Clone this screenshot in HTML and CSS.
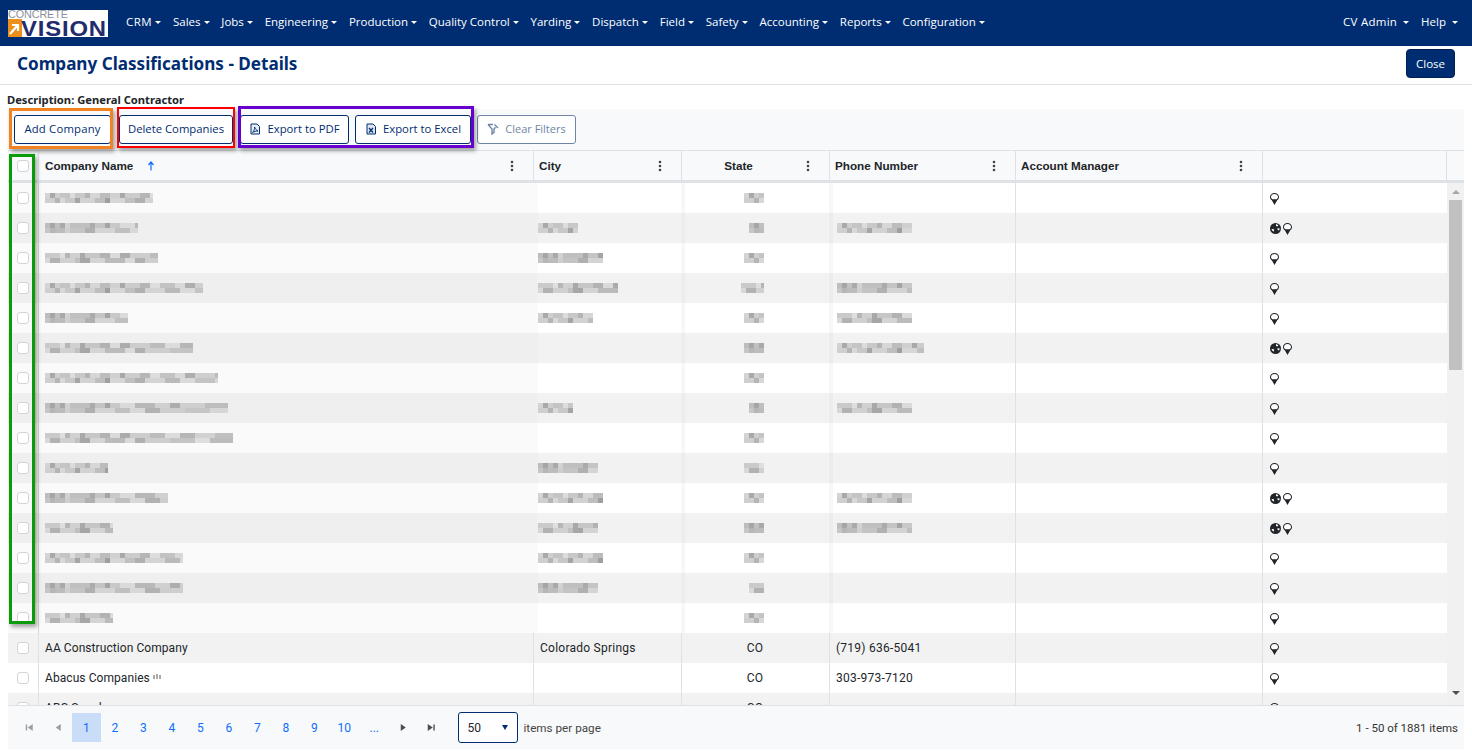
FILE: index.html
```html
<!DOCTYPE html>
<html lang="en">
<head>
<meta charset="utf-8">
<title>Company Classifications - Details</title>
<link rel="stylesheet" href="styles.css">
</head>
<body>
<svg class="defs" width="0" height="0" aria-hidden="true">
  <symbol id="pin" viewBox="0 0 9 12">
    <path d="M4.5 0C2 0 0 1.800 0 4 0 5.400 .8 6.600 1.800 7.300L4.500 12 7.200 7.300C8.200 6.600 9 5.400 9 4 9 1.800 7 0 4.500 0Z" fill="#212529"/>
    <path d="M4.5 1C2.600 1 1 2.300 1 4 1 5 1.600 5.800 2.400 6.200H6.600C7.400 5.800 8 5 8 4 8 2.300 6.400 1 4.500 1Z" fill="#fff"/>
  </symbol>
  <symbol id="globe" viewBox="0 0 11 11">
    <circle cx="5.5" cy="5.5" r="5.500" fill="#212529"/>
    <path d="M6 1 8.400 2.200 7.400 3.400 6 3ZM1.400 6.400 3.200 5.800 4.200 7 3.400 8.800ZM7.400 5.200 9.800 5.400 9 7.400 7.600 6.800Z" fill="#fff"/>
  </symbol>
  <symbol id="pager-first" viewBox="0 0 9 9"><path d="M1 1.500H2.400V7.500H1ZM8 1V8L3 4.500Z" fill="currentColor"/></symbol>
  <symbol id="pager-prev" viewBox="0 0 9 9"><path d="M7 1V8L2 4.500Z" fill="currentColor"/></symbol>
  <symbol id="pager-next" viewBox="0 0 9 9"><path d="M2 1V8L7 4.500Z" fill="currentColor"/></symbol>
  <symbol id="pager-last" viewBox="0 0 9 9"><path d="M8 1.500H6.600V7.500H8ZM1 1V8L6 4.500Z" fill="currentColor"/></symbol>
  <symbol id="kebab" viewBox="0 0 4 12"><circle cx="2" cy="2" r="1.300" fill="#444"/><circle cx="2" cy="6" r="1.300" fill="#444"/><circle cx="2" cy="10" r="1.300" fill="#444"/></symbol>
</svg>

<nav class="navbar">
  <div class="logo">
    <span class="logo-top">CONCRETE</span>
    <span class="logo-mark"><svg class="logo-box" width="14" height="18" viewBox="0 0 14 18"><rect width="14" height="18" fill="#ee8f1c"/><path d="M2 15 9 7M4 6H10V12" stroke="#fff" stroke-width="2.200" fill="none"/></svg><span class="logo-word">VISION</span></span>
  </div>
  <ul class="nav-list">
    <li class="nav-item">CRM</li>
    <li class="nav-item">Sales</li>
    <li class="nav-item">Jobs</li>
    <li class="nav-item">Engineering</li>
    <li class="nav-item">Production</li>
    <li class="nav-item">Quality Control</li>
    <li class="nav-item">Yarding</li>
    <li class="nav-item">Dispatch</li>
    <li class="nav-item">Field</li>
    <li class="nav-item">Safety</li>
    <li class="nav-item">Accounting</li>
    <li class="nav-item">Reports</li>
    <li class="nav-item">Configuration</li>
  </ul>
  <ul class="nav-list nav-right">
    <li class="nav-item wide">CV Admin</li>
    <li class="nav-item">Help</li>
  </ul>
</nav>

<header class="page-head">
  <h1 class="page-title">Company Classifications - Details</h1>
  <button class="btn-close">Close</button>
</header>

<main class="content">
  <div class="description">Description: General Contractor</div>
  <div class="grid">
    <div class="toolbar">
      <button class="btn btn-add">Add Company</button>
      <button class="btn btn-del">Delete Companies</button>
      <button class="btn btn-pdf"><svg class="btn-ico" viewBox="0 0 12 12"><path d="M2 1H8L10.500 3.500V11H2Z" fill="#e8ecf3" stroke="#002d72"/><path d="M3.500 9.500C5 8 6 5.500 5.500 4 6.500 6 7.500 7.500 9 8 7 8 5 8.500 3.500 9.500Z" fill="none" stroke="#002d72" stroke-width=".9"/></svg>Export to PDF</button>
      <button class="btn btn-xls"><svg class="btn-ico" viewBox="0 0 12 12"><path d="M2 1H8L10.500 3.500V11H2Z" fill="#dfe5ef" stroke="#002d72"/><path d="M4 5 8 9.500M8 5 4 9.500" stroke="#002d72" stroke-width="1.200"/></svg>Export to Excel</button>
      <button class="btn btn-clear"><svg class="btn-ico" viewBox="0 0 12 12"><path d="M1 1.500 5 6V11L7 9.500V6L8.500 4.300" fill="none" stroke="#6f85a8" stroke-width="1.400"/><path d="M1 1.500H6M7.500 1.500 11 5" stroke="#6f85a8" stroke-width="1.400"/></svg>Clear Filters</button>
    </div>

    <div class="row head">
      <div class="cell hc"><span class="check"></span></div>
      <div class="cell ht"><span class="ht-label">Company Name</span><svg class="sort" width="8" height="10" viewBox="0 0 8 10"><path d="M4 9.500V2M1.500 4 4 1 6.500 4" stroke="#0d6efd" fill="none" stroke-width="1.200"/></svg><svg class="menu"><use href="#kebab"/></svg></div>
      <div class="cell ht"><span class="ht-label">City</span><svg class="menu"><use href="#kebab"/></svg></div>
      <div class="cell ht center"><span class="ht-label">State</span><svg class="menu"><use href="#kebab"/></svg></div>
      <div class="cell ht"><span class="ht-label">Phone Number</span><svg class="menu"><use href="#kebab"/></svg></div>
      <div class="cell ht"><span class="ht-label">Account Manager</span><svg class="menu"><use href="#kebab"/></svg></div>
      <div class="cell"></div>
      <div class="head-end"></div>
    </div>

    <div class="body">
      <div class="rows">
        <div class="row masked"><div class="cell hc"><span class="check"></span></div><div class="cell"><span class="blur" style="width:108px"></span></div><div class="cell"></div><div class="cell center"><span class="blur" style="width:20px"></span></div><div class="cell"></div><div class="cell"></div><div class="cell ic"><svg class="i-pin"><use href="#pin"/></svg></div></div>
        <div class="row masked"><div class="cell hc"><span class="check"></span></div><div class="cell"><span class="blur b2" style="width:93px"></span></div><div class="cell"><span class="blur" style="width:40px"></span></div><div class="cell center"><span class="blur b2" style="width:15px"></span></div><div class="cell"><span class="blur" style="width:75px"></span></div><div class="cell"></div><div class="cell ic"><svg class="i-globe"><use href="#globe"/></svg><svg class="i-pin"><use href="#pin"/></svg></div></div>
        <div class="row masked"><div class="cell hc"><span class="check"></span></div><div class="cell"><span class="blur b3" style="width:113px"></span></div><div class="cell"><span class="blur b2" style="width:65px"></span></div><div class="cell center"><span class="blur" style="width:20px"></span></div><div class="cell"></div><div class="cell"></div><div class="cell ic"><svg class="i-pin"><use href="#pin"/></svg></div></div>
        <div class="row masked"><div class="cell hc"><span class="check"></span></div><div class="cell"><span class="blur" style="width:158px"></span></div><div class="cell"><span class="blur b3" style="width:80px"></span></div><div class="cell center"><span class="blur b3" style="width:23px"></span></div><div class="cell"><span class="blur b2" style="width:75px"></span></div><div class="cell"></div><div class="cell ic"><svg class="i-pin"><use href="#pin"/></svg></div></div>
        <div class="row masked"><div class="cell hc"><span class="check"></span></div><div class="cell"><span class="blur b2" style="width:83px"></span></div><div class="cell"><span class="blur" style="width:55px"></span></div><div class="cell center"><span class="blur" style="width:20px"></span></div><div class="cell"><span class="blur b3" style="width:75px"></span></div><div class="cell"></div><div class="cell ic"><svg class="i-pin"><use href="#pin"/></svg></div></div>
        <div class="row masked"><div class="cell hc"><span class="check"></span></div><div class="cell"><span class="blur b3" style="width:148px"></span></div><div class="cell"></div><div class="cell center"><span class="blur b2" style="width:20px"></span></div><div class="cell"><span class="blur" style="width:87px"></span></div><div class="cell"></div><div class="cell ic"><svg class="i-globe"><use href="#globe"/></svg><svg class="i-pin"><use href="#pin"/></svg></div></div>
        <div class="row masked"><div class="cell hc"><span class="check"></span></div><div class="cell"><span class="blur" style="width:173px"></span></div><div class="cell"></div><div class="cell center"><span class="blur" style="width:20px"></span></div><div class="cell"></div><div class="cell"></div><div class="cell ic"><svg class="i-pin"><use href="#pin"/></svg></div></div>
        <div class="row masked"><div class="cell hc"><span class="check"></span></div><div class="cell"><span class="blur b2" style="width:183px"></span></div><div class="cell"><span class="blur" style="width:35px"></span></div><div class="cell center"><span class="blur b2" style="width:15px"></span></div><div class="cell"><span class="blur b3" style="width:75px"></span></div><div class="cell"></div><div class="cell ic"><svg class="i-pin"><use href="#pin"/></svg></div></div>
        <div class="row masked"><div class="cell hc"><span class="check"></span></div><div class="cell"><span class="blur b3" style="width:188px"></span></div><div class="cell"></div><div class="cell center"><span class="blur" style="width:20px"></span></div><div class="cell"></div><div class="cell"></div><div class="cell ic"><svg class="i-pin"><use href="#pin"/></svg></div></div>
        <div class="row masked"><div class="cell hc"><span class="check"></span></div><div class="cell"><span class="blur" style="width:63px"></span></div><div class="cell"><span class="blur b2" style="width:60px"></span></div><div class="cell center"><span class="blur b3" style="width:20px"></span></div><div class="cell"></div><div class="cell"></div><div class="cell ic"><svg class="i-pin"><use href="#pin"/></svg></div></div>
        <div class="row masked"><div class="cell hc"><span class="check"></span></div><div class="cell"><span class="blur b2" style="width:123px"></span></div><div class="cell"><span class="blur" style="width:65px"></span></div><div class="cell center"><span class="blur" style="width:20px"></span></div><div class="cell"><span class="blur" style="width:75px"></span></div><div class="cell"></div><div class="cell ic"><svg class="i-globe"><use href="#globe"/></svg><svg class="i-pin"><use href="#pin"/></svg></div></div>
        <div class="row masked"><div class="cell hc"><span class="check"></span></div><div class="cell"><span class="blur b3" style="width:68px"></span></div><div class="cell"><span class="blur b3" style="width:60px"></span></div><div class="cell center"><span class="blur b2" style="width:20px"></span></div><div class="cell"><span class="blur b2" style="width:75px"></span></div><div class="cell"></div><div class="cell ic"><svg class="i-globe"><use href="#globe"/></svg><svg class="i-pin"><use href="#pin"/></svg></div></div>
        <div class="row masked"><div class="cell hc"><span class="check"></span></div><div class="cell"><span class="blur" style="width:138px"></span></div><div class="cell"><span class="blur" style="width:65px"></span></div><div class="cell center"><span class="blur" style="width:20px"></span></div><div class="cell"></div><div class="cell"></div><div class="cell ic"><svg class="i-pin"><use href="#pin"/></svg></div></div>
        <div class="row masked"><div class="cell hc"><span class="check"></span></div><div class="cell"><span class="blur b2" style="width:138px"></span></div><div class="cell"><span class="blur b2" style="width:60px"></span></div><div class="cell center"><span class="blur b3" style="width:15px"></span></div><div class="cell"></div><div class="cell"></div><div class="cell ic"><svg class="i-pin"><use href="#pin"/></svg></div></div>
        <div class="row masked"><div class="cell hc"><span class="check"></span></div><div class="cell"><span class="blur b3" style="width:68px"></span></div><div class="cell"></div><div class="cell center"><span class="blur" style="width:20px"></span></div><div class="cell"></div><div class="cell"></div><div class="cell ic"><svg class="i-pin"><use href="#pin"/></svg></div></div>
        <div class="row"><div class="cell hc"><span class="check"></span></div><div class="cell">AA Construction Company</div><div class="cell">Colorado Springs</div><div class="cell center">CO</div><div class="cell">(719) 636-5041</div><div class="cell"></div><div class="cell ic"><svg class="i-pin"><use href="#pin"/></svg></div></div>
        <div class="row"><div class="cell hc"><span class="check"></span></div><div class="cell">Abacus Companies<svg class="tiny" width="8" height="6" viewBox="0 0 8 6"><path d="M1 1V5M4 0V5M7 1V5" stroke="#555"/></svg></div><div class="cell"></div><div class="cell center">CO</div><div class="cell">303-973-7120</div><div class="cell"></div><div class="cell ic"><svg class="i-pin"><use href="#pin"/></svg></div></div>
        <div class="row"><div class="cell hc"><span class="check"></span></div><div class="cell">ABC Supply</div><div class="cell"></div><div class="cell center">CO</div><div class="cell"></div><div class="cell"></div><div class="cell ic"><svg class="i-pin"><use href="#pin"/></svg></div></div>
      </div>
      <div class="scrollbar">
        <span class="arrow up"></span>
        <span class="thumb"></span>
        <span class="arrow down"></span>
      </div>
    </div>

    <div class="pager">
      <svg class="pg-ico"><use href="#pager-first"/></svg>
      <svg class="pg-ico"><use href="#pager-prev"/></svg>
      <span class="pg on">1</span>
      <span class="pg">2</span><span class="pg">3</span><span class="pg">4</span><span class="pg">5</span><span class="pg">6</span><span class="pg">7</span><span class="pg">8</span><span class="pg">9</span><span class="pg wide">10</span><span class="pg">...</span>
      <svg class="pg-ico dark"><use href="#pager-next"/></svg>
      <svg class="pg-ico dark"><use href="#pager-last"/></svg>
      <span class="select">50<span class="select-caret"></span></span>
      <span class="per-page">items per page</span>
      <span class="total">1 - 50 of 1881 items</span>
    </div>
  </div>
</main>

<div class="mark mark-orange"></div>
<div class="mark mark-red"></div>
<div class="mark mark-purple"></div>
<div class="mark mark-green"></div>
</body>
</html>
```
FILE: styles.css
```css
* { box-sizing: border-box; }
html, body { margin: 0; height: 100%; }
body {
  position: relative;
  height: 751px;
  overflow: hidden;
  background: #fff;
  color: #212529;
  font: 12px/18px Roboto, "Liberation Sans", sans-serif;
}
.defs { position: absolute; }

.navbar {
  height: 46px;
  background: #002d72;
  display: flex;
  align-items: center;
  padding-left: 8px;
  color: #fff;
}
.logo {
  width: 100px;
  height: 27px;
  background: #fff;
  display: flex;
  flex-direction: column;
  flex: none;
}
.logo-top {
  font: 10.800px/8px "Liberation Sans", sans-serif;
  color: #8a8f9c;
  letter-spacing: -0.1px;
  height: 9px;
}
.logo-mark { display: flex; align-items: flex-end; height: 18px; }
.logo-box { flex: none; }
.logo-word {
  font: 900 22.500px/16px "Liberation Sans", sans-serif;
  color: #232c6b;
  letter-spacing: .8px;
  transform: scaleX(1.060);
  transform-origin: left;
  margin-left: -1px;
}
.nav-list {
  list-style: none;
  display: flex;
  margin: 0;
  padding: 0 0 2px 18px;
  font: 11.500px/18px "Open Sans", sans-serif;
}
.nav-right { margin-left: auto; padding: 0 14px 2px 0; }
.nav-item { display: flex; align-items: center; margin-right: 11.800px; }
.nav-item:first-child { letter-spacing: .5px; }
.nav-item.wide { margin-right: 12px; letter-spacing: .25px; }
.nav-item:last-child { margin-right: 0; }
.nav-item::after {
  content: "";
  margin-left: 3px;
  border-top: 3.500px solid #fff;
  border-left: 3px solid transparent;
  border-right: 3px solid transparent;
}
.nav-item.wide::after { margin-left: 6px; }
.nav-right .nav-item:last-child::after { margin-left: 6px; }

.page-head {
  height: 39px;
  border-bottom: 1px solid #dee2e6;
  display: flex;
  align-items: flex-start;
  justify-content: space-between;
  padding: 3px 17px 0;
}
.page-title {
  margin: 0;
  font: 700 17.100px/29px "Noto Sans", sans-serif;
  color: #002d72;
}
.btn-close {
  width: 49px;
  height: 29px;
  background: #002d72;
  color: #fff;
  border: 1px solid #001f50;
  border-radius: 4px;
  font: 11.500px/16px "Open Sans", sans-serif;
  padding: 0;
}

.content { padding: 0 8px; }
.description {
  height: 24px;
  padding: 7px 0 0;
  margin-left: -1px;
  font: 700 11.200px/16px "Noto Sans", sans-serif;
}
.grid { width: 1456px; }
.toolbar {
  height: 41px;
  background: #f8f9fa;
  display: flex;
  align-items: center;
  padding: 0 0 0 6px;
}
.btn {
  height: 29px;
  background: #fff;
  border: 1px solid #002d72;
  border-radius: 3px;
  color: #002d72;
  font: 11.300px/16px "Open Sans", sans-serif;
  padding: 0 0 1px;
  display: flex;
  align-items: center;
  justify-content: center;
  flex: none;
}
.btn-add { width: 97px; margin-right: 8px; letter-spacing: .2px; }
.btn-del { width: 114px; margin-right: 7px; }
.btn-pdf { width: 109px; margin-right: 6px; }
.btn-xls { width: 116px; margin-right: 6px; }
.btn-clear { width: 99px; color: #6f85a8; border-color: #6f85a8; font-size: 11px; }
.btn-ico { width: 12px; height: 12px; margin-right: 6px; }

.row {
  display: grid;
  grid-template-columns: 31px 495px 148px 148px 186px 247px 184px;
  height: 30px;
  background: #fff;
}
.row.head {
  grid-template-columns: 31px 495px 148px 148px 186px 247px 184px 17px;
  height: 33px;
  background: #f8f9fa;
  border-top: 1px solid #dee2e6;
  border-bottom: 3px solid #dee2e6;
}
.cell {
  display: flex;
  align-items: center;
  padding: 0 7px 0 6px;
  border-right: 1px solid #dee2e6;
  white-space: nowrap;
  overflow: hidden;
  letter-spacing: .25px;
}
.cell:nth-child(2) { letter-spacing: .07px; }
.cell:last-child { border-right: 0; }
.row.head .cell:nth-child(7) { border-right: 1px solid #dee2e6; }
.hc { justify-content: center; padding: 0; }
.center { justify-content: center; }
.ht {
  position: relative;
  padding-left: 5px;
  font: 700 11.700px/18px "Liberation Sans", sans-serif;
  letter-spacing: 0;
}
.cell.ht:nth-child(2) { letter-spacing: 0; padding-left: 6px; }
.ht.center .ht-label { margin-right: 32px; }
.menu { position: absolute; right: 19px; top: 9px; width: 4px; height: 12px; }
.sort { margin-left: 14px; }
.check {
  width: 12px;
  height: 12px;
  border: 1px solid #d4d4d4;
  border-radius: 3px;
  background: #fff;
  display: block;
}
.body { display: flex; height: 522px; overflow: hidden; }
.rows { width: 1439px; flex: none; }
.rows .row:nth-child(even) { background: #f2f2f2; }

.masked .cell:nth-child(2),
.masked .cell:nth-child(3),
.masked .cell:nth-child(4) { border-right-color: transparent; }
.masked .cell:nth-child(1) { background: #fafafa; border-right-color: #d6d6d6; }
.masked .cell:nth-child(2) { background: #fafafa; }
.masked .cell:nth-child(3) { background: linear-gradient(90deg, #fafafa 4px, transparent 4px); }
.masked .cell:nth-child(4),
.masked .cell:nth-child(5) { background: linear-gradient(90deg, #f7f7f7 3px, transparent 3px); }
.rows .masked:nth-child(even) .cell:nth-child(1),
.rows .masked:nth-child(even) .cell:nth-child(2) { background: #efefef; }
.rows .masked:nth-child(even) .cell:nth-child(3) { background: linear-gradient(90deg, #efefef 4px, transparent 4px); }
.rows .masked:nth-child(even) .cell:nth-child(4),
.rows .masked:nth-child(even) .cell:nth-child(5) { background: linear-gradient(90deg, #ececec 3px, transparent 3px); }
.masked .cell:nth-child(3) .blur { margin-left: -2px; }
.masked .cell:nth-child(5) .blur { margin-left: 1px; }
.masked .center { justify-content: flex-end; padding-right: 65px; }

.blur {
  display: block;
  height: 10px;
  flex: none;
  background:
    linear-gradient(90deg, #d4d4d4 0 5px, #a9a9a9 5px 10px, #cecece 10px 15px, #c4c4c4 15px 25px, #dcdcdc 25px 30px, #c8c8c8 30px 40px, #b4b4b4 40px 45px, #d6d6d6 45px 55px, #bcbcbc 55px 65px, #d0d0d0 65px 75px, #a8a8a8 75px 80px, #cccccc 80px 95px, #b6b6b6 95px 105px, #dddddd 105px 115px, #c2c2c2 115px 130px, #d8d8d8 130px 140px, #aeaeae 140px 150px, #cfcfcf 150px 170px, #bbbbbb 170px 190px) 0 0 / 100% 5px no-repeat,
    linear-gradient(90deg, #cfcfcf 0 10px, #b5b5b5 10px 15px, #d8d8d8 15px 20px, #c8c8c8 20px 30px, #a5a5a5 30px 35px, #d2d2d2 35px 50px, #bebebe 50px 60px, #9f9f9f 60px 65px, #d6d6d6 65px 80px, #c0c0c0 80px 90px, #b0b0b0 90px 100px, #d4d4d4 100px 120px, #bababa 120px 135px, #dadada 135px 150px, #c4c4c4 150px 170px, #d8d8d8 170px 190px) 0 5px / 100% 5px no-repeat;
}
.b2 {
  background:
    linear-gradient(90deg, #bdbdbd 0 5px, #a6a6a6 5px 10px, #c0c0c0 10px 15px, #a9a9a9 15px 20px, #d2d2d2 20px 25px, #bfbfbf 25px 45px, #aaaaaa 45px 50px, #c4c4c4 50px 60px, #a4a4a4 60px 65px, #c8c8c8 65px 75px, #dadada 75px 90px, #b8b8b8 90px 110px, #d0d0d0 110px 125px, #adadad 125px 135px, #cfcfcf 135px 160px, #bdbdbd 160px 190px) 0 0 / 100% 5px no-repeat,
    linear-gradient(90deg, #c6c6c6 0 5px, #b6b6b6 5px 10px, #bcbcbc 10px 20px, #cfcfcf 20px 25px, #c4c4c4 25px 40px, #b0b0b0 40px 50px, #d4d4d4 50px 70px, #c0c0c0 70px 85px, #d8d8d8 85px 100px, #b2b2b2 100px 115px, #cecece 115px 140px, #c6c6c6 140px 165px, #d6d6d6 165px 190px) 0 5px / 100% 5px no-repeat;
}
.b3 {
  background:
    linear-gradient(90deg, #cacaca 0 15px, #dedede 15px 20px, #b6b6b6 20px 25px, #d0d0d0 25px 35px, #a8a8a8 35px 40px, #c6c6c6 40px 55px, #b2b2b2 55px 65px, #dadada 65px 75px, #acacac 75px 85px, #cdcdcd 85px 105px, #bcbcbc 105px 120px, #dcdcdc 120px 135px, #b6b6b6 135px 150px, #d2d2d2 150px 170px, #c0c0c0 170px 190px) 0 0 / 100% 5px no-repeat,
    linear-gradient(90deg, #d8d8d8 0 5px, #b2b2b2 5px 15px, #d0d0d0 15px 30px, #c0c0c0 30px 35px, #a6a6a6 35px 45px, #d4d4d4 45px 60px, #bbbbbb 60px 80px, #dadada 80px 90px, #b0b0b0 90px 100px, #cecece 100px 125px, #c4c4c4 125px 150px, #dedede 150px 165px, #bcbcbc 165px 190px) 0 5px / 100% 5px no-repeat;
}
.ic { padding-left: 7px; }
.i-pin { width: 9px; height: 12px; display: block; flex: none; margin-top: 2px; }
.i-globe { width: 11px; height: 11px; display: block; flex: none; margin: 1px 2px 0 0; }
.tiny { margin-left: 3px; margin-top: -2px; }

.scrollbar {
  width: 17px;
  flex: none;
  background: #f1f1f1;
  display: flex;
  flex-direction: column;
  align-items: center;
}
.arrow { width: 0; height: 0; border-left: 4px solid transparent; border-right: 4px solid transparent; flex: none; }
.arrow.up { border-bottom: 4px solid #a3a3a3; margin-top: 7px; }
.arrow.down { border-top: 4px solid #505050; margin-top: 321px; }
.thumb { width: 13px; height: 170px; background: #c1c1c1; margin-top: 6px; flex: none; }

.pager {
  height: 44px;
  background: #f8f9fa;
  border-top: 1px solid #dee2e6;
  display: flex;
  align-items: center;
  padding: 0 6px 0 7px;
  color: #0d6efd;
}
.pg-ico { width: 28.500px; height: 9px; color: #9a9fa5; flex: none; }
.pg-ico.dark { color: #4a4f55; }
.pg {
  width: 28.500px;
  height: 29px;
  display: flex;
  align-items: center;
  justify-content: center;
  flex: none;
}
.pg.wide { width: 31.500px; }
.pg.on { background: #c9ddf9; }
.select {
  width: 60px;
  height: 31px;
  margin-left: 12px;
  border: 1px solid #002d72;
  border-radius: 3px;
  background: #fff;
  color: #212529;
  display: flex;
  align-items: center;
  justify-content: space-between;
  padding: 0 9px;
  flex: none;
}
.select-caret {
  border-top: 5px solid #002d72;
  border-left: 3.500px solid transparent;
  border-right: 3.500px solid transparent;
}
.per-page { margin-left: 6px; color: #444; font-size: 11.700px; }
.total { margin-left: auto; color: #333; font-size: 11.500px; }

.mark { position: absolute; box-shadow: 2px 3px 4px rgba(0,0,0,.35); }
.mark-orange { left: 9px; top: 108px; width: 104px; height: 41px; border: 3px solid #f58220; }
.mark-red { left: 117px; top: 107px; width: 118px; height: 41px; border: 2px solid #f00; }
.mark-purple { left: 238px; top: 106px; width: 236px; height: 42px; border: 3px solid #6600cc; }
.mark-green { left: 9px; top: 154px; width: 26px; height: 470px; border: 3px solid #0a9b0a; }
```
